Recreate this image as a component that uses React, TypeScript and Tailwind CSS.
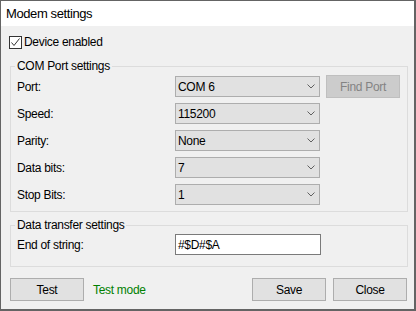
import React from "react";

const rows = [
  { label: "Port:", value: "COM 6" },
  { label: "Speed:", value: "115200" },
  { label: "Parity:", value: "None" },
  { label: "Data bits:", value: "7" },
  { label: "Stop Bits:", value: "1" },
];

function Chevron() {
  return (
    <svg width="8" height="5" viewBox="0 0 8 5" className="shrink-0">
      <path d="M0.5 0.5 L4 4 L7.5 0.5" fill="none" stroke="#606060" strokeWidth="1" />
    </svg>
  );
}

function Combo({ value }: { value: string }) {
  return (
    <div className="w-[145px] h-[21px] bg-[#e1e1e1] border border-[#adadad] flex items-center justify-between pl-[2px] pr-[4px]">
      <span>{value}</span>
      <Chevron />
    </div>
  );
}

function Button({ children, disabled }: { children: React.ReactNode; disabled?: boolean }) {
  return (
    <div
      className={`w-[74px] h-[23px] border flex items-center justify-center ${
        disabled ? "bg-[#cccccc] border-[#bfbfbf] text-[#838383]" : "bg-[#e1e1e1] border-[#adadad] text-black"
      }`}
    >
      {children}
    </div>
  );
}

export default function App() {
  return (
    <div className="w-[416px] h-[311px] flex flex-col border-l border-t border-r-2 border-b-2 border-[#646464] font-['Liberation_Sans',sans-serif] text-[12px] tracking-[-0.3px] text-black">
      {/* title */}
      <div className="h-[25px] shrink-0 bg-white pl-[5px] flex items-center text-[13px] tracking-[-0.4px]">
        Modem settings
      </div>

      <div className="flex-1 bg-[#f0f0f0] flex flex-col">
        {/* device enabled */}
        <div className="mt-[10px] ml-[8px] h-[13px] flex items-center gap-[2px]">
          <div className="w-[13px] h-[13px] border border-[#333333] bg-white flex items-center justify-center">
            <svg width="11" height="11" viewBox="0 0 11 11">
              <path d="M1.5 5.5 L4 8.5 L9.5 1.5" fill="none" stroke="#333333" strokeWidth="1" />
            </svg>
          </div>
          <span className="leading-[13px]">Device enabled</span>
        </div>

        {/* COM port */}
        <fieldset className="mt-[10px] ml-[9px] w-[398px] border border-[#dcdcdc] pb-[6px]">
          <legend className="ml-[4px] px-[2px] leading-[14px]">COM Port settings</legend>
          <div className="pt-[3px] flex flex-col gap-[6px]">
            {rows.map((r, i) => (
              <div key={r.label} className="h-[21px] flex items-center">
                <span className="w-[164px] pl-[6px]">{r.label}</span>
                <Combo value={r.value} />
                {i === 0 && (
                  <div className="ml-[6px] -my-[1px]">
                    <Button disabled>Find Port</Button>
                  </div>
                )}
              </div>
            ))}
          </div>
        </fieldset>

        {/* data transfer */}
        <fieldset className="mt-[6px] ml-[9px] w-[398px] border border-[#dcdcdc] pb-[11px]">
          <legend className="ml-[4px] px-[2px] leading-[14px]">Data transfer settings</legend>
          <div className="pt-[2px] h-[23px] flex items-center">
            <span className="w-[164px] pl-[6px]">End of string:</span>
            <div className="w-[146px] h-[21px] bg-white border border-[#7a7a7a] flex items-center pl-[2px]">
              #$D#$A
            </div>
          </div>
        </fieldset>

        {/* buttons */}
        <div className="mt-[11px] ml-[9px] mr-[7px] flex items-center">
          <Button>Test</Button>
          <span className="ml-[9px] text-[#008000]">Test mode</span>
          <div className="flex-1" />
          <Button>Save</Button>
          <div className="ml-[7px]">
            <Button>Close</Button>
          </div>
        </div>
      </div>
    </div>
  );
}
